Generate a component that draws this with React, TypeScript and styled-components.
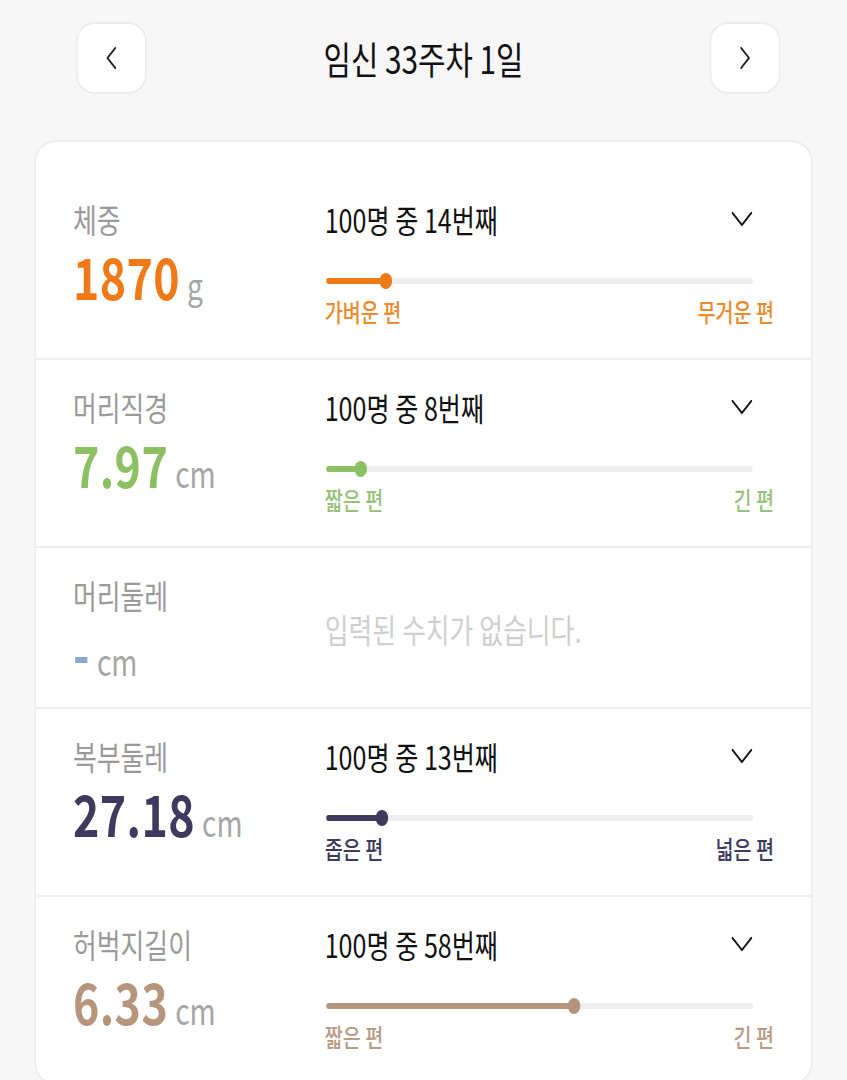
import React from 'react';
import styled, { createGlobalStyle } from 'styled-components';

// the reference is a 1080px wide phone screen squeezed into 847px
const SQUEEZE = 847 / 1080;

const GlobalStyle = createGlobalStyle`
  html, body {
    margin: 0;
    padding: 0;
    background: #f7f7f7;
    overflow-x: hidden;
  }
  body {
    font-family: "Noto Sans CJK KR", "Noto Sans", sans-serif;
    color: #111;
  }
`;

const Viewport = styled.div`
  width: 100%;
  overflow: hidden;
`;

const Stage = styled.div`
  width: 1080px;
  transform: scaleX(${SQUEEZE});
  transform-origin: 0 0;
  padding-bottom: 40px;
`;

const Header = styled.header`
  display: grid;
  grid-template-columns: 90px 1fr 90px;
  align-items: center;
  padding: 22px 85px 0 97px;
`;

const NavButton = styled.button`
  width: 90px;
  height: 72px;
  display: flex;
  align-items: center;
  justify-content: center;
  background: #fff;
  border: 2px solid #ececec;
  border-radius: 24px / 19px;
  padding: 0;
  cursor: pointer;
`;

const Title = styled.h1`
  margin: 0 12px 0 0;
  text-align: center;
  font-size: 38px;
  font-weight: 400;
  line-height: 48px;
  color: #111;
`;

const Card = styled.section`
  margin: 46px 44px 0;
  background: #fff;
  border: 2px solid #ececec;
  border-radius: 28px / 22px;
  padding-top: 30px;
`;

const Row = styled.div`
  display: flex;
  padding: 27px 47px 22px 47px;
  border-bottom: 2px solid #efefef;
  &:last-child {
    border-bottom: none;
  }
`;

const Summary = styled.div`
  width: 321px;
  flex-shrink: 0;
`;

const Label = styled.div`
  font-size: 33px;
  line-height: 40px;
  color: #9a9a9a;
`;

const ValueLine = styled.div`
  margin-top: 6px;
  height: 64px;
  display: flex;
  align-items: baseline;
  line-height: 60px;
`;

const Value = styled.span<{ $color: string }>`
  font-size: 57px;
  font-weight: 700;
  letter-spacing: 0.5px;
  color: ${(p) => p.$color};
`;

const Unit = styled.span`
  margin-left: 9px;
  font-size: 36px;
  color: #a6a6a6;
`;

const Detail = styled.div`
  flex: 1;
  display: flex;
  flex-direction: column;
`;

const Empty = styled.div`
  flex: 1;
  display: flex;
  align-items: center;
  font-size: 33px;
  color: #cfcfcf;
  padding-bottom: 2px;
`;

const RankLine = styled.div`
  display: flex;
  align-items: center;
  justify-content: space-between;
  margin-right: 27px;
  height: 40px;
`;

const Rank = styled.span`
  font-size: 32px;
  line-height: 40px;
  color: #111;
`;

const Toggle = styled.button`
  display: flex;
  align-items: center;
  background: none;
  border: none;
  padding: 0;
  cursor: pointer;
`;

const Track = styled.div`
  position: relative;
  margin: 34px 27px 0 2px;
  height: 16px;
  display: flex;
  align-items: center;
  &::before {
    content: '';
    position: absolute;
    left: 0;
    right: 0;
    top: 5px;
    height: 6px;
    border-radius: 3px;
    background: #eeeeee;
  }
`;

const Fill = styled.div<{ $color: string }>`
  position: relative;
  height: 6px;
  border-radius: 3px;
  background: ${(p) => p.$color};
`;

const Thumb = styled.span<{ $color: string }>`
  position: absolute;
  right: -8px;
  top: -5px;
  width: 16px;
  height: 16px;
  border-radius: 50%;
  background: ${(p) => p.$color};
`;

const Scale = styled.div<{ $color: string }>`
  display: flex;
  justify-content: space-between;
  margin: 7px 0 10px;
  font-size: 25px;
  font-weight: 500;
  line-height: 30px;
  color: ${(p) => p.$color};
`;

interface Measure {
  label: string;
  value: string;
  unit: string;
  color: string;
  scaleColor?: string;
  rank?: number;
  low?: string;
  high?: string;
}

const measures: Measure[] = [
  { label: '체중', value: '1870', unit: 'g', color: '#f07a17', scaleColor: '#ec8a2e', rank: 14, low: '가벼운 편', high: '무거운 편' },
  { label: '머리직경', value: '7.97', unit: 'cm', color: '#8dc062', scaleColor: '#96c379', rank: 8, low: '짧은 편', high: '긴 편' },
  { label: '머리둘레', value: '-', unit: 'cm', color: '#86a9cc' },
  { label: '복부둘레', value: '27.18', unit: 'cm', color: '#3d3a5e', scaleColor: '#3d3a5e', rank: 13, low: '좁은 편', high: '넓은 편' },
  { label: '허벅지길이', value: '6.33', unit: 'cm', color: '#b7957d', scaleColor: '#b89c87', rank: 58, low: '짧은 편', high: '긴 편' },
];

function Chevron({ dir }: { dir: 'left' | 'right' }) {
  const points = dir === 'left' ? '13,2 3,12 13,22' : '3,2 13,12 3,22';
  return (
    <svg width="16" height="24" viewBox="0 0 16 24">
      <polyline points={points} fill="none" stroke="#222" strokeWidth="2.2" strokeLinecap="round" strokeLinejoin="round" />
    </svg>
  );
}

function ChevronDown() {
  return (
    <svg width="28" height="16" viewBox="0 0 28 16">
      <polyline points="2,2 14,14 26,2" fill="none" stroke="#111" strokeWidth="2.2" strokeLinecap="round" strokeLinejoin="round" />
    </svg>
  );
}

function MeasureRow({ m }: { m: Measure }) {
  return (
    <Row>
      <Summary>
        <Label>{m.label}</Label>
        <ValueLine>
          <Value $color={m.color}>{m.value}</Value>
          <Unit>{m.unit}</Unit>
        </ValueLine>
      </Summary>
      {m.rank === undefined ? (
        <Empty>입력된 수치가 없습니다.</Empty>
      ) : (
        <Detail>
          <RankLine>
            <Rank>100명 중 {m.rank}번째</Rank>
            <Toggle aria-label="펼치기">
              <ChevronDown />
            </Toggle>
          </RankLine>
          <Track>
            <Fill $color={m.color} style={{ width: `${m.rank}%` }}>
              <Thumb $color={m.color} />
            </Fill>
          </Track>
          <Scale $color={m.scaleColor || m.color}>
            <span>{m.low}</span>
            <span>{m.high}</span>
          </Scale>
        </Detail>
      )}
    </Row>
  );
}

export default function App() {
  return (
    <Viewport>
      <GlobalStyle />
      <Stage>
        <Header>
          <NavButton aria-label="이전 주">
            <Chevron dir="left" />
          </NavButton>
          <Title>임신 33주차 1일</Title>
          <NavButton aria-label="다음 주">
            <Chevron dir="right" />
          </NavButton>
        </Header>
        <Card>
          {measures.map((m) => (
            <MeasureRow key={m.label} m={m} />
          ))}
        </Card>
      </Stage>
    </Viewport>
  );
}
